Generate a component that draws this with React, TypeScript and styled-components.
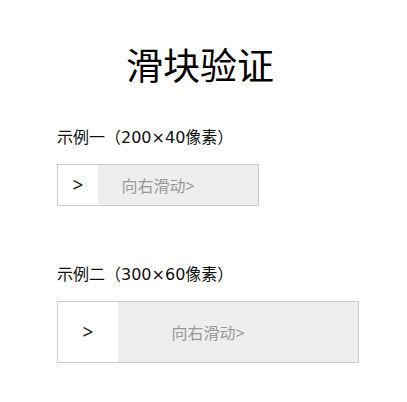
import styled, { createGlobalStyle } from "styled-components"

const GlobalStyle = createGlobalStyle`
  html, body {
    margin: 0;
    padding: 0;
    background: #fff;
  }
  body {
    font-family: "Noto Sans", "Noto Sans CJK SC", sans-serif;
    color: #000;
  }
`

type SliderProps = { w: number; h: number }

const Slider: React.FC<SliderProps> = ({ w, h }) => (
  <Track $w={w} $h={h}>
    <Handle $h={h}>&gt;</Handle>
    <Hint>向右滑动&gt;</Hint>
  </Track>
)

const App: React.FC = () => (
  <>
    <GlobalStyle />
    <Page>
      <Title>滑块验证</Title>
      <Example>
        <Label>示例一（200×40像素）</Label>
        <Slider w={200} h={40} />
      </Example>
      <Example>
        <Label>示例二（300×60像素）</Label>
        <Slider w={300} h={60} />
      </Example>
    </Page>
  </>
)

export default App

const Page = styled.div`
  width: 400px;
  padding: 41px 0 0 57px;
  box-sizing: border-box;
  display: flex;
  flex-direction: column;
`
const Title = styled.h1`
  margin: 0 0 35px -57px;
  font-size: 37px;
  font-weight: 400;
  line-height: 50px;
  text-align: center;
`
const Example = styled.section`
  display: flex;
  flex-direction: column;
  gap: 14px;
  margin-bottom: 57px;
`
const Label = styled.div`
  font-family: "DejaVu Sans", "Noto Sans CJK TC", sans-serif;
  font-size: 16px;
  line-height: 24px;
  color: #111;
`
const Track = styled.div<{ $w: number; $h: number }>`
  position: relative;
  width: ${p => p.$w}px;
  height: ${p => p.$h}px;
  border: 1px solid #ccc;
  background: #eee;
  display: flex;
  align-items: center;
  justify-content: center;
`
const Handle = styled.div<{ $h: number }>`
  position: absolute;
  left: 0;
  top: 0;
  width: ${p => p.$h}px;
  height: ${p => p.$h}px;
  background: #fff;
  display: flex;
  align-items: center;
  justify-content: center;
  font-size: 19px;
  color: #222;
`
const Hint = styled.span`
  font-size: 16px;
  color: #999;
`
